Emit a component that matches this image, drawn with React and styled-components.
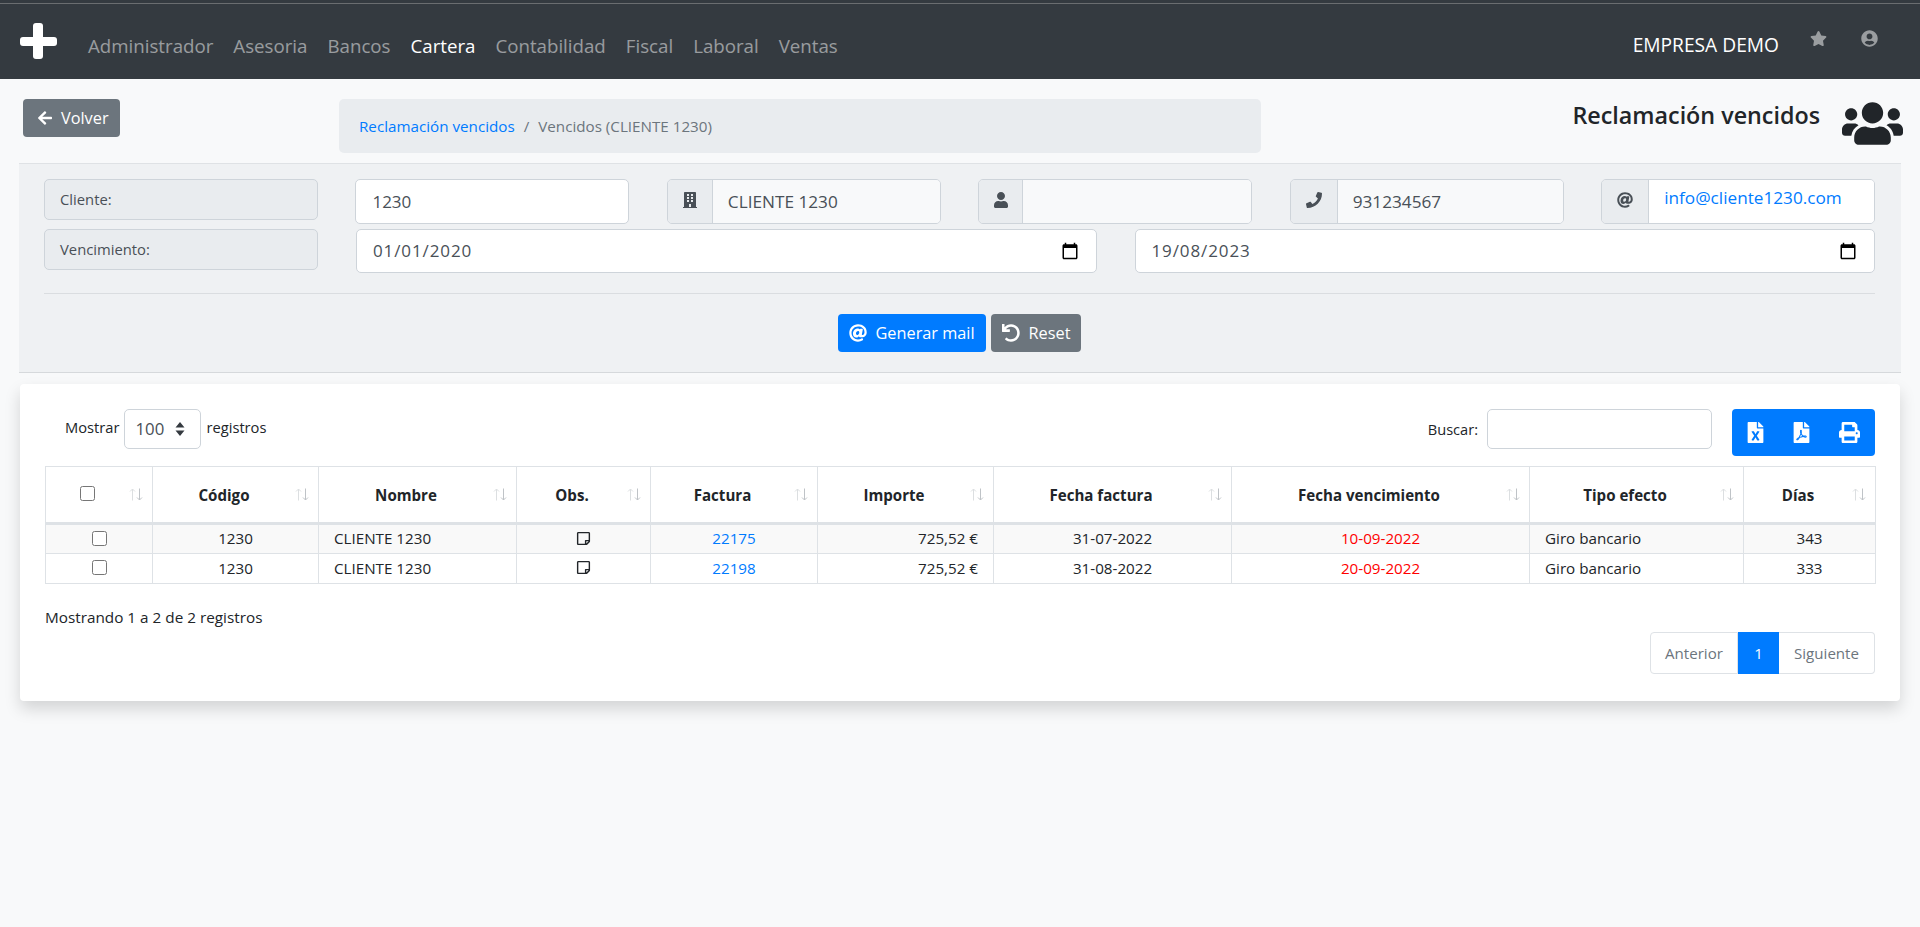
import React from 'react';
import styled, { createGlobalStyle } from 'styled-components';
import {
  FaArrowLeft,
  FaAt,
  FaBuilding,
  FaFileExcel,
  FaFilePdf,
  FaPhone,
  FaPrint,
  FaRegStickyNote,
  FaStar,
  FaUndo,
  FaUser,
  FaUserCircle,
  FaUsers,
} from 'react-icons/fa';

const GlobalStyle = createGlobalStyle`
  html, body {
    margin: 0;
    background: #f8f9fa;
    font-family: 'Open Sans', 'Liberation Sans', sans-serif;
    color: #212529;
  }
  * {
    box-sizing: border-box;
  }
`;

const Page = styled.div`
  min-height: 100vh;
  padding-bottom: 1px;
`;

const TopEdge = styled.div`
  height: 4px;
  background: #343a40;
  border-bottom: 1px solid #6a6d70;
`;

const Navbar = styled.nav`
  display: flex;
  align-items: center;
  height: 75px;
  padding: 0 42px 0 20px;
  background: #343a40;
`;

const Logo = styled.svg`
  width: 37px;
  height: 36px;
  margin-right: 31px;
  margin-top: -1px;
  flex: none;
`;

const NavLinks = styled.div`
  display: flex;
  gap: 20px;
  margin-top: 8px;
`;

const NavLink = styled.a`
  font-size: 18.7px;
  color: ${(p) => (p.$active ? '#fff' : 'rgba(255, 255, 255, 0.5)')};
`;

const NavRight = styled.div`
  display: flex;
  align-items: flex-start;
  margin-left: auto;
  padding-top: 4px;
`;

const Company = styled.span`
  margin: 1px 31px 0 0;
  font-size: 19.2px;
  color: #fff;
`;

const NavIcon = styled.span`
  display: flex;
  margin-left: ${(p) => p.$gap || 0}px;
  font-size: 17px;
  color: rgba(255, 255, 255, 0.5);
`;

const PageHead = styled.div`
  display: grid;
  grid-template-columns: 316px 922px 1fr;
  padding: 20px 17px 10px 23px;
`;

const Button = styled.button`
  display: inline-flex;
  align-items: center;
  height: 38px;
  padding: 0 11px;
  border: 0;
  border-radius: 4px;
  font: inherit;
  font-size: 16.3px;
  color: #fff;
  background: ${(p) => (p.$primary ? '#007bff' : '#6c757d')};
  svg {
    flex: none;
  }
`;

const BackButton = styled(Button)`
  justify-self: start;
  gap: 8px;
  width: 97px;
  padding: 0 0 0 14px;
`;

const Breadcrumb = styled.div`
  display: flex;
  align-items: center;
  height: 54px;
  padding: 0 20px;
  border-radius: 5px;
  font-size: 15.2px;
  color: #6c757d;
  background: #e9ecef;
`;

const Crumb = styled.a`
  color: #007bff;
`;

const CrumbSep = styled.span`
  margin: 0 9px;
`;

const TitleBox = styled.div`
  display: flex;
  justify-content: flex-end;
  align-items: flex-start;
  gap: 22px;
`;

const Title = styled.h1`
  margin: -1px 0 0;
  font-size: 23.3px;
  line-height: 34px;
  font-weight: 600;
`;

const UsersIcon = styled(FaUsers)`
  flex: none;
  width: 61px;
  height: 49px;
`;

const FilterPanel = styled.section`
  margin: 0 19px;
  padding: 15px 26px 20px 25px;
  background: #eff1f3;
  border-top: 1px solid #dfe2e5;
  border-bottom: 1px solid #d6d9dc;
`;

const TopFields = styled.div`
  display: grid;
  grid-template-columns: repeat(6, 1fr);
  column-gap: 37.6px;
  align-items: start;
`;

const DateFields = styled.div`
  display: grid;
  grid-template-columns: 274px 1fr 1fr;
  column-gap: 38px;
  align-items: start;
  margin-top: 5px;
`;

const FieldLabel = styled.div`
  display: flex;
  align-items: center;
  height: 41px;
  padding: 0 15px 2px;
  border: 1px solid #ced4da;
  border-radius: 5px;
  font-size: 14.8px;
  color: #495057;
  background: #e9ecef;
`;

const Field = styled.div`
  display: flex;
  align-items: center;
  justify-content: space-between;
  height: ${(p) => p.$h || 45}px;
  padding: 0 16px;
  border: 1px solid #ced4da;
  border-radius: 5px;
  font-size: 17px;
  color: #495057;
  background: #fff;
`;

const DateText = styled.span`
  padding-bottom: 2px;
  letter-spacing: 0.9px;
`;

const InputGroup = styled.div`
  display: flex;
  height: 45px;
  border: 1px solid #ced4da;
  border-radius: 5px;
  overflow: hidden;
`;

const Addon = styled.span`
  display: flex;
  align-items: center;
  justify-content: center;
  flex: none;
  width: ${(p) => p.$w}px;
  padding-bottom: 3px;
  border-right: 1px solid #ced4da;
  font-size: 16px;
  color: #495057;
  background: #e9ecef;
`;

const GroupValue = styled.div`
  display: flex;
  align-items: center;
  flex: 1;
  padding: 0 15px;
  font-size: 17.2px;
  color: #495057;
  background: #f8f9fa;
`;

const MailValue = styled(GroupValue)`
  align-items: flex-start;
  padding-top: 6px;
  font-size: 17.2px;
  white-space: nowrap;
  color: #007bff;
  background: #fff;
`;

const Calendar = styled.svg`
  width: 18px;
  height: 18px;
  margin-right: 1px;
  fill: #000;
`;

const Divider = styled.hr`
  margin: 20px 0;
  border: 0;
  border-top: 1px solid #dadde0;
`;

const Actions = styled.div`
  display: flex;
  justify-content: center;
  gap: 5px;
`;

const MailButton = styled(Button)`
  gap: 9px;
`;

const Card = styled.section`
  margin: 11px 20px 0;
  padding: 25px 25px 27px;
  border-radius: 4px;
  background: #fff;
  box-shadow: 0 8px 16px rgba(0, 0, 0, 0.15);
`;

const Toolbar = styled.div`
  display: flex;
  align-items: flex-start;
  height: 47px;
  margin-bottom: 10px;
`;

const LengthControl = styled.label`
  display: flex;
  align-items: flex-start;
  gap: 5px;
  height: 40px;
  margin-left: 20px;
  font-size: 14.7px;
  line-height: 36px;
`;

const FakeSelect = styled.span`
  display: flex;
  align-items: center;
  justify-content: space-between;
  width: 77px;
  height: 40px;
  padding: 0 15px 0 10px;
  border: 1px solid #ced4da;
  border-radius: 5px;
  font-size: 16.8px;
  color: #495057;
`;

const SelectCaret = styled.svg`
  width: 10px;
  height: 14px;
  fill: #343a40;
`;

const SearchControl = styled.label`
  display: flex;
  align-items: center;
  gap: 9px;
  height: 40px;
  margin-left: auto;
  font-size: 14.6px;
`;

const SearchBox = styled.input`
  width: 225px;
  height: 40px;
  border: 1px solid #ced4da;
  border-radius: 5px;
  background: #fff;
`;

const ExportGroup = styled.div`
  display: flex;
  align-items: center;
  gap: 24.5px;
  width: 143px;
  height: 47px;
  margin-left: 20px;
  padding-left: 13px;
  border-radius: 4px;
  font-size: 21px;
  color: #fff;
  background: #007bff;
`;

const PrintIcon = styled(FaPrint)`
  margin-left: 3px;
`;

const Table = styled.table`
  width: 1830px;
  table-layout: fixed;
  border-collapse: collapse;
  font-size: 15.2px;
`;

const Th = styled.th`
  height: 57px;
  padding: 0 9px 0 12px;
  border: 1px solid #dee2e6;
  border-bottom: 3px solid #dee2e6;
  font-size: 15.1px;
  font-weight: 700;
`;

const ThInner = styled.div`
  display: flex;
  align-items: center;
`;

const ThLabel = styled.span`
  flex: 1;
  margin-right: 12px;
  text-align: center;
`;

const SortArrows = styled.svg`
  flex: none;
  width: 14px;
  height: 13px;
  fill: none;
  stroke-width: 1;
`;

const UpArrow = styled.path`
  stroke: #dcdfe1;
`;

const DownArrow = styled.path`
  stroke: #bfc3c7;
`;

const Tr = styled.tr`
  background: ${(p) => (p.$striped ? '#f9f9f9' : '#fff')};
`;

const Td = styled.td`
  height: 30px;
  padding: 0 15px 2px;
  border: 1px solid #dee2e6;
  text-align: ${(p) => p.$align || 'center'};
  color: ${(p) => p.$color || '#212529'};
`;

const Check = styled.input`
  display: block;
  width: 15px;
  height: 15px;
  margin: ${(p) => p.$margin || '0 auto'};
`;

const NoteIcon = styled(FaRegStickyNote)`
  display: block;
  width: 15px;
  height: 15px;
  margin: 0 auto;
`;

const Info = styled.div`
  margin-top: 23px;
  font-size: 15.3px;
  line-height: 20px;
`;

const Pager = styled.div`
  display: flex;
  justify-content: flex-end;
  margin-top: 5px;
`;

const PageItem = styled.a`
  display: flex;
  align-items: center;
  justify-content: center;
  width: ${(p) => p.$w}px;
  height: 42px;
  font-size: 15.1px;
  border: 1px solid ${(p) => (p.$active ? '#007bff' : '#dee2e6')};
  border-left-width: ${(p) => (p.$first ? 1 : 0)}px;
  border-right-width: ${(p) => (p.$active ? 0 : 1)}px;
  border-radius: ${(p) => (p.$first ? '4px 0 0 4px' : p.$last ? '0 4px 4px 0' : '0')};
  color: ${(p) => (p.$active ? '#fff' : '#6c757d')};
  background: ${(p) => (p.$active ? '#007bff' : '#fff')};
`;

const menu = ['Administrador', 'Asesoria', 'Bancos', 'Cartera', 'Contabilidad', 'Fiscal', 'Laboral', 'Ventas'];

const columns = [
  { width: 107, label: <Check type="checkbox" $margin="0 0 3px 22px" /> },
  { width: 166, label: 'Código' },
  { width: 198, label: 'Nombre' },
  { width: 134, label: 'Obs.' },
  { width: 167, label: 'Factura' },
  { width: 176, label: 'Importe' },
  { width: 238, label: 'Fecha factura' },
  { width: 298, label: 'Fecha vencimiento' },
  { width: 214, label: 'Tipo efecto' },
  { width: 132, label: 'Días' },
];

const rows = [
  { factura: '22175', fecha: '31-07-2022', vencimiento: '10-09-2022', dias: 343 },
  { factura: '22198', fecha: '31-08-2022', vencimiento: '20-09-2022', dias: 333 },
];

const CalendarIcon = () => (
  <Calendar viewBox="0 0 24 24">
    <path d="M20 3h-1V1h-2v2H7V1H5v2H4c-1.1 0-2 .9-2 2v16c0 1.1.9 2 2 2h16c1.1 0 2-.9 2-2V5c0-1.1-.9-2-2-2zm0 18H4V8h16v13z" />
  </Calendar>
);

const SortIcon = () => (
  <SortArrows viewBox="0 0 14 13">
    <UpArrow d="M3.5 12.5V1M1 3.5L3.5 1 6 3.5" />
    <DownArrow d="M10.5.5V12M8 9.5l2.5 2.5L13 9.5" />
  </SortArrows>
);

const App = () => {
  return (
    <Page>
      <GlobalStyle />
      <TopEdge />
      <Navbar>
        <Logo viewBox="0 0 37 36">
          <rect x="13" y="0" width="10" height="36" rx="3" fill="#fff" />
          <rect x="0" y="14" width="37" height="9" rx="3" fill="#fff" />
        </Logo>
        <NavLinks>
          {menu.map((item) => (
            <NavLink key={item} $active={item === 'Cartera'}>
              {item}
            </NavLink>
          ))}
        </NavLinks>
        <NavRight>
          <Company>EMPRESA DEMO</Company>
          <NavIcon>
            <FaStar />
          </NavIcon>
          <NavIcon $gap={34}>
            <FaUserCircle />
          </NavIcon>
        </NavRight>
      </Navbar>

      <PageHead>
        <BackButton>
          <FaArrowLeft size={16} />
          Volver
        </BackButton>
        <Breadcrumb>
          <Crumb>Reclamación vencidos</Crumb>
          <CrumbSep>/</CrumbSep>
          Vencidos (CLIENTE 1230)
        </Breadcrumb>
        <TitleBox>
          <Title>Reclamación vencidos</Title>
          <UsersIcon />
        </TitleBox>
      </PageHead>

      <FilterPanel>
        <TopFields>
          <FieldLabel>Cliente:</FieldLabel>
          <Field>1230</Field>
          <InputGroup>
            <Addon $w={45}>
              <FaBuilding />
            </Addon>
            <GroupValue>CLIENTE 1230</GroupValue>
          </InputGroup>
          <InputGroup>
            <Addon $w={44}>
              <FaUser />
            </Addon>
            <GroupValue />
          </InputGroup>
          <InputGroup>
            <Addon $w={47}>
              <FaPhone />
            </Addon>
            <GroupValue>931234567</GroupValue>
          </InputGroup>
          <InputGroup>
            <Addon $w={47}>
              <FaAt />
            </Addon>
            <MailValue>info@cliente1230.com</MailValue>
          </InputGroup>
        </TopFields>
        <DateFields>
          <FieldLabel>Vencimiento:</FieldLabel>
          <Field $h={44}>
            <DateText>01/01/2020</DateText>
            <CalendarIcon />
          </Field>
          <Field $h={44}>
            <DateText>19/08/2023</DateText>
            <CalendarIcon />
          </Field>
        </DateFields>
        <Divider />
        <Actions>
          <MailButton $primary>
            <FaAt size={18} />
            Generar mail
          </MailButton>
          <MailButton>
            <FaUndo size={18} />
            Reset
          </MailButton>
        </Actions>
      </FilterPanel>

      <Card>
        <Toolbar>
          <LengthControl>
            Mostrar
            <FakeSelect>
              100
              <SelectCaret viewBox="0 0 10 14">
                <path d="M5 0l4.5 5.5h-9zM5 14L.5 8.5h9z" />
              </SelectCaret>
            </FakeSelect>
            registros
          </LengthControl>
          <SearchControl>
            Buscar:
            <SearchBox type="text" />
          </SearchControl>
          <ExportGroup>
            <FaFileExcel />
            <FaFilePdf />
            <PrintIcon />
          </ExportGroup>
        </Toolbar>

        <Table>
          <colgroup>
            {columns.map((col, i) => (
              <col key={i} width={col.width} />
            ))}
          </colgroup>
          <thead>
            <tr>
              {columns.map((col, i) => (
                <Th key={i}>
                  <ThInner>
                    <ThLabel>{col.label}</ThLabel>
                    <SortIcon />
                  </ThInner>
                </Th>
              ))}
            </tr>
          </thead>
          <tbody>
            {rows.map((row, i) => (
              <Tr key={row.factura} $striped={i === 0}>
                <Td>
                  <Check type="checkbox" />
                </Td>
                <Td>1230</Td>
                <Td $align="left">CLIENTE 1230</Td>
                <Td>
                  <NoteIcon />
                </Td>
                <Td $color="#007bff">{row.factura}</Td>
                <Td $align="right">725,52 €</Td>
                <Td>{row.fecha}</Td>
                <Td $color="#ff0000">{row.vencimiento}</Td>
                <Td $align="left">Giro bancario</Td>
                <Td>{row.dias}</Td>
              </Tr>
            ))}
          </tbody>
        </Table>

        <Info>Mostrando 1 a 2 de 2 registros</Info>
        <Pager>
          <PageItem $w={88} $first>
            Anterior
          </PageItem>
          <PageItem $w={41} $active>
            1
          </PageItem>
          <PageItem $w={96} $last>
            Siguiente
          </PageItem>
        </Pager>
      </Card>
    </Page>
  );
};

export default App;
